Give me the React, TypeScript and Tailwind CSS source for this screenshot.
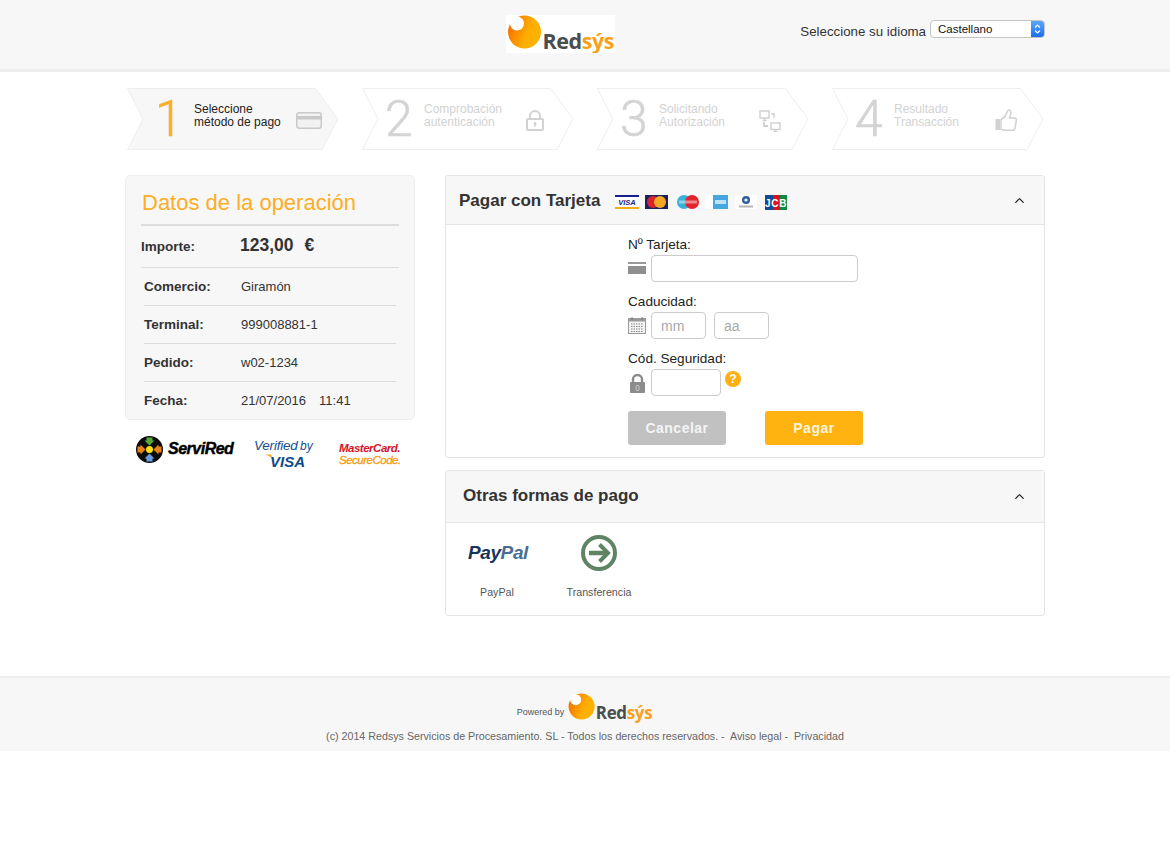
import type { ReactNode } from 'react';
import { ChevronUp } from 'lucide-react';

const RedsysLogo = ({ width, height, id }: { width: number; height: number; id: string }) => (
  <svg width={width} height={height} viewBox="0 0 109 38">
    <defs>
      <linearGradient id={id} x1="0" y1="0.3" x2="1" y2="0.7">
        <stop offset="0" stopColor="#f36f00" />
        <stop offset="0.6" stopColor="#ffae00" />
        <stop offset="1" stopColor="#fdb300" />
      </linearGradient>
    </defs>
    <circle cx="18.5" cy="17" r="16.5" fill={`url(#${id})`} />
    <circle cx="11" cy="8.5" r="7" fill="#fff" />
    <text x="36.5" y="33.5" fontFamily="'Open Sans', sans-serif" fontWeight="700" fontSize="21.5" fill="#4a4d4e" textLength="72">
      Red<tspan fill="#f9a01b">sýs</tspan>
    </text>
  </svg>
);

const CardIcon = () => (
  <svg width="26" height="17" viewBox="0 0 26 17" fill="none">
    <rect x="0.75" y="0.75" width="24.5" height="15.5" rx="2.5" stroke="#c9c9c9" strokeWidth="1.5" fill="#f2f2f2" />
    <rect x="1" y="4" width="24" height="3.5" fill="#c9c9c9" />
  </svg>
);

const LockIcon = () => (
  <svg width="18" height="21" viewBox="0 0 18 21" fill="none">
    <path d="M4 9V6a5 5 0 0 1 10 0v3" stroke="#d2d2d2" strokeWidth="2" />
    <rect x="1" y="9" width="16" height="11" rx="1" stroke="#d2d2d2" strokeWidth="2" />
    <circle cx="9" cy="13.5" r="1.5" fill="#d2d2d2" />
    <rect x="8.3" y="14" width="1.4" height="3" fill="#d2d2d2" />
  </svg>
);

const NetworkIcon = () => (
  <svg width="22" height="22" viewBox="0 0 22 22" fill="none" stroke="#cfcfcf" strokeWidth="1.4">
    <rect x="1" y="1" width="9" height="7" />
    <path d="M5.5 8v2M3.5 10.5h4" />
    <path d="M12 4h3v4" />
    <rect x="12" y="13" width="9" height="6.5" />
    <path d="M16.5 19.5v2M14.5 21.5h4" />
    <path d="M5 12v4h4" strokeWidth="1.8" />
  </svg>
);

const ThumbIcon = () => (
  <svg width="22" height="23" viewBox="0 0 22 23" fill="none">
    <rect x="0.5" y="10" width="4.5" height="11" fill="#d2d2d2" />
    <path d="M6 10.5c2-1 4.5-3 5.5-6 .5-1.500 1-3.500 2.500-3.500 2 0 2.500 2.500 1.500 5l-1 3h5c1.500 0 2 1 1.800 2.500l-1.300 7.500c-.3 1.500-1 2.300-2.500 2.300H10c-1.500 0-2.500-.8-4-1V10.500z" stroke="#d2d2d2" strokeWidth="1.500" fill="#fff" />
  </svg>
);

const steps = [
  { n: '1', lines: ['Seleccione', 'método de pago'], icon: <CardIcon />, active: true, numBox: 'w-[67px] pl-[28px]', textBox: 'w-[102px]' },
  { n: '2', lines: ['Comprobación', 'autenticación'], icon: <LockIcon />, active: false, numBox: 'w-[62px] pl-[23px]', textBox: 'w-[102px]' },
  { n: '3', lines: ['Solicitando', 'Autorización'], icon: <NetworkIcon />, active: false, numBox: 'w-[62px] pl-[23px]', textBox: 'w-[100px]' },
  { n: '4', lines: ['Resultado', 'Transacción'], icon: <ThumbIcon />, active: false, numBox: 'w-[62px] pl-[23px]', textBox: 'w-[101px]' },
];

const Step = ({ step }: { step: (typeof steps)[number] }) => (
  <div className="relative flex h-[62px] w-[212px] items-center">
    <svg className="absolute left-0 top-0" width="212" height="62" viewBox="0 0 212 62">
      <path
        d="M0.500 0.500H188.500L211 31L195 61.500H0.500L16 31Z"
        fill={step.active ? '#f7f7f7' : '#fff'}
        stroke="#eeeeee"
      />
    </svg>
    <div className={`relative text-[50px] font-light leading-[62px] [-webkit-text-stroke:0.6px_currentColor] [font-family:Roboto,sans-serif] ${step.numBox} ${step.active ? 'text-[#fbae2c]' : 'text-[#d4d4d4]'}`}>
      {step.n}
    </div>
    <div className={`relative mb-[7px] text-[12px] leading-[13px] ${step.textBox} ${step.active ? 'text-[#222]' : 'text-[#d2d2d2] font-medium'}`}>
      {step.lines.map((line) => (
        <div key={line}>{line}</div>
      ))}
    </div>
    <div className="relative mt-[3px]">{step.icon}</div>
  </div>
);

const opRows: { label: string; value: ReactNode }[] = [
  { label: 'Comercio:', value: 'Giramón' },
  { label: 'Terminal:', value: '999008881-1' },
  { label: 'Pedido:', value: 'w02-1234' },
  { label: 'Fecha:', value: <>21/07/2016<span className="ml-[13px]">11:41</span></> },
];

const OperationCard = () => (
  <div className="h-[245px] rounded-[5px] border border-[#eeeeee] bg-[#f7f7f7] px-[15px]">
    <h2 className="h-[48px] pl-px pt-[12px] text-[22px] leading-[30px] text-[#fdae26]">Datos de la operación</h2>
    <div className="flex h-[44px] items-center border-t-2 border-b border-t-[#dddddd] border-b-[#dddddd] text-[#333]">
      <span className="mt-[2px] w-[99px] text-[13.500px] font-bold">Importe:</span>
      <span className="mb-[3px] text-[17.500px] font-bold">123,00<span className="ml-[11px]">€</span></span>
    </div>
    <div className="px-[3px]">
      {opRows.map((row, i) => (
        <div key={row.label} className={`flex h-[38px] items-center text-[13px] text-[#333] ${i < 3 ? 'border-b border-[#dddddd]' : ''}`}>
          <span className={`w-[97px] text-[13.500px] font-bold ${i < 3 ? 'mt-[2px]' : ''}`}>{row.label}</span>
          <span>{row.value}</span>
        </div>
      ))}
    </div>
  </div>
);

const ServiRedIcon = () => (
  <svg width="27" height="27" viewBox="0 0 27 27">
    <circle cx="13.500" cy="13.500" r="13.500" fill="#0c0c0c" />
    <circle cx="13.500" cy="13.500" r="3.500" fill="#f7e017" />
    <path d="M10.500 1.500h6v3h2l-5 5-5-5h2z" fill="#5aa53c" />
    <path d="M10.500 25.500h6v-3h2l-5-5-5 5h2z" fill="#6a9be0" />
    <path d="M1.500 10.500v6h3v2l5-5-5-5v2z" fill="#e8801c" />
    <path d="M25.500 10.500v6h-3v2l-5-5 5-5v2z" fill="#e8801c" />
  </svg>
);

const VerifiedByVisa = () => (
  <svg width="62" height="30" viewBox="0 0 62 30">
    <text x="0" y="11" fontFamily="'Liberation Sans', sans-serif" fontStyle="italic" fontSize="13.500" letterSpacing="-0.2" fill="#14508f">Verified</text>
    <text x="46" y="11" fontFamily="'Liberation Sans', sans-serif" fontStyle="italic" fontSize="12" fill="#14508f">by</text>
    <path d="M11 15.500h6l1.500 4c-2-2-4.500-3.300-7.500-4z" fill="#f4a51c" />
    <text x="16" y="27.500" fontFamily="'Liberation Sans', sans-serif" fontWeight="700" fontStyle="italic" fontSize="15" fill="#0b4a8f">VISA</text>
  </svg>
);

const SealLogos = () => (
  <div className="mt-[11px] flex h-[36px] items-center pl-[11px]">
    <div className="flex w-[118px] items-center gap-[5px]">
      <ServiRedIcon />
      <span className="text-[16px] font-bold italic tracking-[-0.5px] text-black [-webkit-text-stroke:0.4px_black]">ServiRed</span>
    </div>
    <div className="mt-[9px] w-[85px]">
      <VerifiedByVisa />
    </div>
    <div className="mt-[10px] flex flex-col text-[11.500px] font-bold italic leading-[12px] tracking-[-0.5px]">
      <span className="text-[#d4152b]">MasterCard.</span>
      <span className="font-normal text-[#f79a0f] [-webkit-text-stroke:0.3px_#f79a0f]">SecureCode.</span>
    </div>
  </div>
);

const BrandMarks = () => (
  <div className="ml-[15px] mt-[4px] flex items-center">
    <svg width="24" height="14" viewBox="0 0 24 14">
      <rect width="24" height="14" fill="#fff" />
      <rect width="24" height="2" fill="#1a1f8f" />
      <rect y="12" width="24" height="2" fill="#f4ab1c" />
      <text x="12" y="10" textAnchor="middle" fontFamily="'Liberation Sans', sans-serif" fontWeight="700" fontStyle="italic" fontSize="7.500" fill="#1a1f8f">VISA</text>
    </svg>
    <svg className="ml-[6px]" width="23" height="14" viewBox="0 0 23 14">
      <rect width="23" height="14" fill="#1c2260" />
      <circle cx="8" cy="7" r="6" fill="#d8232a" />
      <circle cx="15" cy="7" r="6" fill="#f5a623" />
    </svg>
    <svg className="ml-[9px]" width="22" height="14" viewBox="0 0 22 14">
      <circle cx="7" cy="7" r="7" fill="#3ab0d8" />
      <circle cx="15" cy="7" r="7" fill="#e2252c" />
      <rect x="2" y="5.500" width="18" height="3" fill="#fff" opacity="0.45" />
    </svg>
    <svg className="ml-[6px]" width="23" height="14" viewBox="0 0 23 14">
      <rect width="23" height="14" fill="#fff" />
      <rect x="8" width="15" height="14" fill="#46a6e0" />
      <rect x="10" y="5" width="11" height="4" fill="#bfe2f6" />
    </svg>
    <svg className="ml-[7px]" width="22" height="14" viewBox="0 0 22 14">
      <rect width="22" height="14" fill="#fff" />
      <circle cx="11" cy="5" r="4" fill="#2b5f9e" />
      <circle cx="11" cy="5" r="1.600" fill="#fff" />
      <rect x="4" y="10.500" width="14" height="2" fill="#b6b6b6" />
    </svg>
    <svg className="ml-[8px]" width="22" height="15" viewBox="0 0 22 15">
      <rect width="8" height="15" fill="#0e4c96" />
      <rect x="8" width="7" height="15" fill="#d8131f" />
      <rect x="15" width="7" height="15" fill="#0a8a45" />
      <text x="11" y="11.500" textAnchor="middle" fontFamily="'Liberation Sans', sans-serif" fontWeight="700" fontSize="10" letterSpacing="0.7" fill="#fff">JCB</text>
    </svg>
  </div>
);

const inputClass = 'h-[27px] rounded-[4px] border border-[#cccccc] bg-white px-[9px] text-[14px] outline-none placeholder:text-[#a9a9a9]';

const FieldCardIcon = () => (
  <svg width="18" height="12" viewBox="0 0 18 12">
    <rect width="18" height="2" fill="#999" />
    <rect y="4" width="18" height="8" fill="#8f8f8f" />
  </svg>
);

const CalendarIcon = () => (
  <svg width="18" height="18" viewBox="0 0 18 18" fill="none">
    <rect x="0.500" y="2.500" width="17" height="15" fill="#f4f4f4" stroke="#9a9a9a" />
    <rect x="0.500" y="2.500" width="17" height="3" fill="#9a9a9a" />
    <path d="M4 1v3M14 1v3" stroke="#777" />
    <path d="M3 8h12M3 10.500h12M3 13h12M3 15.500h12" stroke="#888" strokeDasharray="1.500 1" />
  </svg>
);

const PadlockIcon = () => (
  <svg width="15" height="19" viewBox="0 0 15 19" fill="none">
    <path d="M3 9V5.500a4.500 4.500 0 0 1 9 0V9" stroke="#8c8c8c" strokeWidth="2.400" />
    <rect y="8" width="15" height="11" rx="1" fill="#8c8c8c" />
    <rect x="6" y="11.500" width="3" height="5" rx="1" stroke="#c9c9c9" />
  </svg>
);

const CardForm = () => (
  <div className="ml-[182px] h-[232px] pt-[11px] text-[13.600px] leading-[17px] text-[#222]">
    <div className="h-[19px]">Nº Tarjeta:</div>
    <div className="flex h-[27px] items-center gap-[5px]">
      <span className="-mt-px"><FieldCardIcon /></span>
      <input className={`${inputClass} w-[207px]`} aria-label="Nº Tarjeta" />
    </div>
    <div className="mt-[11px] h-[19px]">Caducidad:</div>
    <div className="flex h-[27px] items-center">
      <span className="mr-[5px] -mt-px"><CalendarIcon /></span>
      <input className={`${inputClass} w-[55px]`} placeholder="mm" />
      <input className={`${inputClass} ml-[8px] w-[55px]`} placeholder="aa" />
    </div>
    <div className="mt-[11px] h-[19px]">Cód. Seguridad:</div>
    <div className="flex h-[27px] items-center">
      <span className="ml-[2px] mr-[6px] mt-[1px]"><PadlockIcon /></span>
      <input className={`${inputClass} w-[70px]`} aria-label="Cód. Seguridad" />
      <span className="mb-[7px] ml-[4px] flex h-[16px] w-[16px] items-center justify-center rounded-full bg-[#fdb00f] text-[12px] font-bold text-white">?</span>
    </div>
    <div className="mt-[15px] flex gap-[39px]">
      <button className="h-[34px] w-[98px] rounded-[3px] bg-[#c1c1c1] text-[14px] font-bold tracking-[0.5px] text-[#f4f4f4]">Cancelar</button>
      <button className="h-[34px] w-[98px] rounded-[3px] bg-[#ffb310] text-[14px] font-bold tracking-[0.5px] text-[#fdf3dc]">Pagar</button>
    </div>
  </div>
);

const ArrowCircle = () => (
  <svg width="36" height="36" viewBox="0 0 36 36" fill="none">
    <circle cx="18" cy="18" r="16" stroke="#5f8463" strokeWidth="4" fill="#fff" />
    <path d="M8 18h17" stroke="#5f8463" strokeWidth="4.500" />
    <path d="M18.500 9.500L27 18l-8.500 8.500" stroke="#5f8463" strokeWidth="4" />
  </svg>
);

const OtherMethods = () => (
  <div className="flex h-[92px] text-[10.700px] text-[#555]">
    <div className="w-[112px] pl-[22px] pt-[17px]">
      <div className="h-[26px] text-[19px] font-bold italic leading-[26px] tracking-[-0.4px]">
        <span className="text-[#17335c]">Pay</span>
        <span className="text-[#4a6d94]">Pal</span>
      </div>
      <div className="mt-[19px] pl-[12px] leading-[14px]">PayPal</div>
    </div>
    <div className="flex w-[82px] flex-col items-center pt-[12px]">
      <ArrowCircle />
      <div className="mt-[14px] leading-[14px]">Transferencia</div>
    </div>
  </div>
);

export default function App() {
  return (
    <div className="min-h-[851px] bg-white font-['Liberation_Sans',Arial,sans-serif]">
      <header className="h-[72px] border-b-[3px] border-[#eeeeee] bg-[#f7f7f7]">
        <div className="mx-auto flex w-[920px] items-start">
          <div className="ml-[381px] mt-[15px] bg-white">
            <RedsysLogo width={109} height={38} id="logo-top" />
          </div>
          <div className="ml-auto mt-[20px] flex items-start">
            <span className="mt-[4px] text-[13.300px] leading-[16px] text-[#333]">Seleccione su idioma</span>
            <div className="ml-[4px] flex h-[18px] w-[115px] overflow-hidden rounded-[4px] border border-[#c4c4c4] bg-white">
              <span className="flex-1 pl-[7px] text-[11.500px] leading-[16px] text-[#111]">Castellano</span>
              <span className="flex w-[13px] items-center justify-center bg-gradient-to-b from-[#5aa6fb] to-[#1a6ff0]">
                <svg width="7" height="12" viewBox="0 0 7 12" fill="none" stroke="#fff" strokeWidth="1.200">
                  <path d="M1 4.500L3.500 2L6 4.500M1 7.500L3.500 10L6 7.500" />
                </svg>
              </span>
            </div>
          </div>
        </div>
      </header>

      <main className="mx-auto w-[920px]">
        <div className="ml-[2px] mt-[16px] flex gap-[23px]">
          {steps.map((step) => (
            <Step key={step.n} step={step} />
          ))}
        </div>

        <div className="mt-[25px] flex gap-[30px]">
          <div className="w-[290px]">
            <OperationCard />
            <SealLogos />
          </div>

          <div className="w-[600px]">
            <section className="overflow-hidden rounded-[3px] border border-[#e4e4e4]">
              <div className="flex h-[49px] items-center border-b border-[#e4e4e4] bg-[#f7f7f7] pl-[13px] pr-[17px]">
                <h3 className="mt-px text-[17px] font-bold text-[#333]">Pagar con Tarjeta</h3>
                <BrandMarks />
                <ChevronUp className="ml-auto h-[15px] w-[15px] text-[#222]" strokeWidth={2} />
              </div>
              <CardForm />
            </section>

            <section className="mt-[12px] overflow-hidden rounded-[3px] border border-[#e4e4e4]">
              <div className="flex h-[52px] items-center border-b border-[#e4e4e4] bg-[#f7f7f7] pl-[17px] pr-[17px]">
                <h3 className="mb-[2px] text-[17px] font-bold text-[#333]">Otras formas de pago</h3>
                <ChevronUp className="ml-auto h-[15px] w-[15px] text-[#222]" strokeWidth={2} />
              </div>
              <OtherMethods />
            </section>
          </div>
        </div>
      </main>

      <footer className="mt-[60px] h-[75px] border-t-[2px] border-[#eeeeee] bg-[#f7f7f7]">
        <div className="flex items-start justify-center pt-[15px]">
          <span className="mr-[3px] mt-[13px] text-[9px] leading-[12px] text-[#555]">Powered by</span>
          <RedsysLogo width={86} height={30} id="logo-footer" />
        </div>
        <p className="mt-[6px] text-center text-[10.700px] leading-[14px] text-[#666]">
          (c) 2014 Redsys Servicios de Procesamiento. SL - Todos los derechos reservados. -&nbsp; Aviso legal -&nbsp; Privacidad
        </p>
      </footer>
    </div>
  );
}
